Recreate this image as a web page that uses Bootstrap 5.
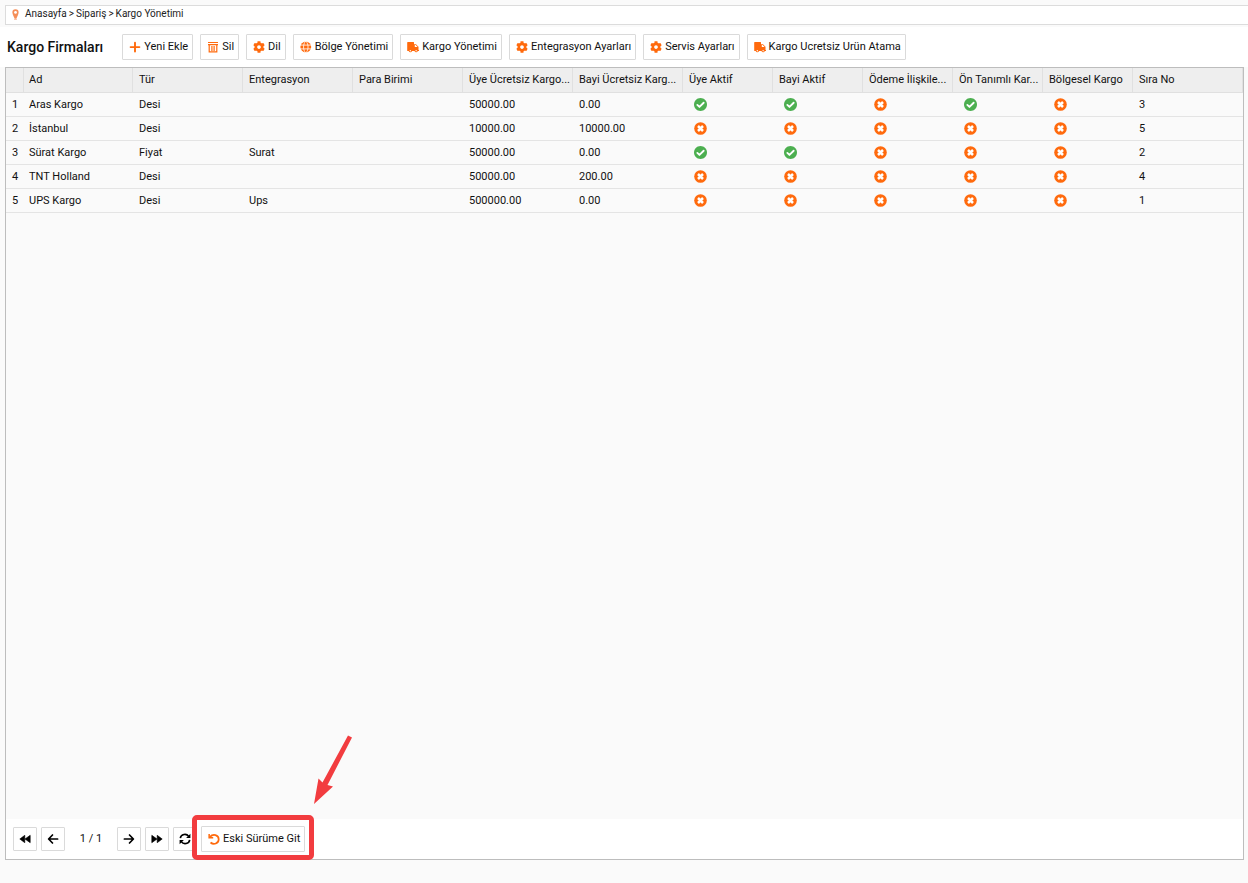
<!DOCTYPE html>
<html lang="tr">
<head>
<meta charset="utf-8">
<meta name="viewport" content="width=device-width, initial-scale=1">
<title>Kargo Yönetimi</title>
<link href="https://cdn.jsdelivr.net/npm/bootstrap@5.3.0/dist/css/bootstrap.min.css" rel="stylesheet">
<style>
  body { background: #fafafa; color: #111; font-family: Roboto, "Liberation Sans", sans-serif; font-size: 11px; line-height: 16px; }
  .crumbs { margin: 5px 0 2px 5px; height: 20px; padding: 0 4px 2px; gap: 4px; border: 1px solid #dcdcdc; border-right: 0; font-size: 10px; }
  .crumbs a { color: #222; text-decoration: none; }
  .crumbs ol { gap: 2px; line-height: 16px; }
  .toolbar { min-height: 40px; padding: 0 7px; gap: 7px; }
  .toolbar h1 { font-size: 14px; line-height: 20px; font-weight: 500; margin: 0 12px 0 0; }
  .tool-btn { --bs-btn-font-size: 11px; --bs-btn-line-height: 16px; --bs-btn-bg: #fff; --bs-btn-color: #111; --bs-btn-border-color: #dadada; --bs-btn-border-radius: 1px; --bs-btn-hover-bg: #f4f4f4; --bs-btn-hover-border-color: #ccc; display: flex; align-items: center; gap: 3px; height: 26px; padding: 0 4px 0 6px; white-space: nowrap; }
  .tool-btn svg { width: 12px; height: 12px; color: #ff6a0d; flex: none; }
  .page-btn { padding: 0; justify-content: center; width: 24px; height: 24px; flex: none; }
  .page-btn svg { color: #000; }
  .grid-panel { margin: 0 4px 23px 5px; border: 1px solid #bdbdbd; }
  .grid-table { table-layout: fixed; border-collapse: separate; border-spacing: 0; line-height: 16px; }
  .grid-table th, .grid-table td { height: 24px; padding: 0 0 0 6px; border-bottom: 1px solid #e4e4e4; white-space: nowrap; vertical-align: middle; font-weight: 400; }
  .grid-table thead th { height: 25px; background: #eee; border-right: 1px solid #e0e0e0; border-bottom-color: #e0e0e0; }
  .grid-table tr > :nth-child(1) { padding: 0; text-align: center; }
  .grid-table tr > :nth-child(2) { padding-left: 5px; }
  .grid-table td svg { display: block; width: 13px; height: 13px; margin-left: 5px; }
  .c-no { width: 18px; } .c-name { width: 109px; } .c-text { width: 110px; } .c-flag { width: 90px; }
  .yes { color: #4caf50; } .no { color: #ff6a0d; }
  .pager { height: 40px; padding: 0 7px; gap: 4px; }
  .page-count { width: 44px; text-align: center; }
  .callout-frame { inset: -11px -9px -8px -9px; border: 5px solid #f23c3f; border-radius: 5px; pointer-events: none; }
  .callout-arrow { left: 112px; bottom: 47px; width: 42px; height: 72px; pointer-events: none; }
</style>
</head>
<body class="d-flex flex-column min-vh-100">
<svg class="d-none" aria-hidden="true">
  <symbol id="check" viewBox="8 8 496 496"><path fill="currentColor" d="M504 256c0 136.967-111.033 248-248 248S8 392.967 8 256 119.033 8 256 8s248 111.033 248 248z"/><path fill="none" stroke="#fff" stroke-width="70" stroke-linecap="round" stroke-linejoin="round" d="M135 272l81 78 161-161"/></symbol>
  <symbol id="cross" viewBox="0 0 13 13"><circle cx="6.5" cy="6.5" r="6.3" fill="currentColor"/><path stroke="#fff" stroke-width="2.5" d="M4 4l5 5M9 4L4 9"/></symbol>
  <symbol id="plus" viewBox="0 0 12 12"><path stroke="currentColor" stroke-width="1.9" stroke-linecap="round" d="M6 1.7v8.8M1.6 6.1h8.8"/></symbol>
  <symbol id="trash" viewBox="0 0 12 12"><path fill="none" stroke="currentColor" stroke-width="1.2" d="M1 1.5h10M1 3.6h10M2.2 3.6v7.3h7.6V3.6M4.9 5v5M7.1 5v5"/></symbol>
  <symbol id="cog" viewBox="0 0 512 512"><path fill="currentColor" d="M487.4 315.7l-42.6-24.6c4.3-23.2 4.3-47 0-70.2l42.6-24.6c4.9-2.8 7.1-8.6 5.5-14-11.1-35.6-30-67.8-54.7-94.6-3.8-4.1-10-5.1-14.8-2.3L380.8 110c-17.9-15.4-38.5-27.3-60.8-35.1V25.8c0-5.6-3.9-10.5-9.4-11.7-36.7-8.2-74.3-7.8-109.2 0-5.5 1.2-9.4 6.1-9.4 11.7V75c-22.2 7.9-42.8 19.8-60.8 35.1L88.7 85.5c-4.9-2.8-11-1.9-14.8 2.3-24.7 26.7-43.6 58.9-54.7 94.6-1.7 5.4.6 11.2 5.5 14L67.3 221c-4.3 23.2-4.3 47 0 70.2l-42.6 24.6c-4.9 2.8-7.1 8.6-5.5 14 11.1 35.6 30 67.8 54.7 94.6 3.8 4.1 10 5.1 14.8 2.3l42.6-24.6c17.9 15.4 38.5 27.3 60.8 35.1v49.2c0 5.6 3.9 10.5 9.4 11.7 36.7 8.2 74.3 7.8 109.2 0 5.5-1.2 9.4-6.1 9.4-11.7v-49.2c22.2-7.9 42.8-19.8 60.8-35.1l42.6 24.6c4.9 2.8 11 1.9 14.8-2.3 24.7-26.7 43.6-58.9 54.7-94.6 1.5-5.5-.7-11.3-5.6-14.1zM256 336c-44.1 0-80-35.9-80-80s35.9-80 80-80 80 35.9 80 80-35.9 80-80 80z"/></symbol>
  <symbol id="globe" viewBox="0 0 12 12"><circle cx="5.8" cy="6" r="5.4" fill="currentColor"/><path fill="none" stroke="#fff" stroke-width=".8" d="M0 4.1h12M0 7.9h12M5.8 0C2.8 3 2.8 9 5.8 12C8.8 9 8.8 3 5.8 0"/></symbol>
  <symbol id="truck" viewBox="0 0 12 12"><path fill="currentColor" fill-rule="evenodd" d="M.8 1H6.500q.5 0 .5.500V3.200H9l2.500 2.500V9H12v1H10.800a1.700 1.700 0 0 1-3.300 0H5a1.700 1.700 0 0 1-3.300 0H.8Q.2 10 .2 9.500V1.600Q.2 1 .8 1zM7.800 4v2h2.800L8.700 4z"/><circle cx="3.300" cy="9.800" r=".7" fill="#fff"/><circle cx="9.100" cy="9.800" r=".7" fill="#fff"/></symbol>
  <symbol id="rewind" viewBox="0 0 12 12"><path fill="currentColor" stroke="currentColor" stroke-width=".6" stroke-linejoin="round" d="M5.800 2.300v7.400L.8 6zM11.200 2.300v7.400L6 6z"/></symbol>
  <symbol id="forward" viewBox="0 0 12 12"><path fill="currentColor" stroke="currentColor" stroke-width=".6" stroke-linejoin="round" d="M6.200 2.300v7.400l5-3.700zM.8 2.300v7.400L6 6z"/></symbol>
  <symbol id="left" viewBox="0 0 12 12"><path fill="none" stroke="currentColor" stroke-width="1.700" stroke-linecap="round" stroke-linejoin="round" d="M5.500 2L1.600 6l3.900 4M2 6h8.600"/></symbol>
  <symbol id="right" viewBox="0 0 12 12"><path fill="none" stroke="currentColor" stroke-width="1.700" stroke-linecap="round" stroke-linejoin="round" d="M6.500 2l3.900 4-3.900 4M10 6H1.400"/></symbol>
  <symbol id="sync" viewBox="0 0 12 12"><path fill="none" stroke="currentColor" stroke-width="1.600" d="M1.300 5.200C1.900 1 7.500.2 9.700 3.400M10.700 6.800C10.100 11 4.500 11.800 2.300 8.600"/><path fill="currentColor" d="M11.400.8v4.300H7.100zM.6 11.200V6.900h4.300z"/></symbol>
  <symbol id="undo" viewBox="0 0 12 12"><path fill="none" stroke="currentColor" stroke-width="1.700" d="M2 3.900C5 .4 10.700 1.800 10.700 6.200C10.700 10.500 5.700 12.200 2.500 9.500"/><path fill="currentColor" d="M.4.9h1.500v3h3.300v1.500H.4z"/></symbol>
  <symbol id="pin" viewBox="0 0 12 12"><path fill="#f58e58" d="M6 .3a3.400 3.400 0 0 1 3.400 3.500C9.400 6 7.500 8.500 7 10.700H5C4.500 8.500 2.600 6 2.600 3.800A3.400 3.400 0 0 1 6 .3z"/><circle cx="6" cy="3.700" r="1.500" fill="#fff"/><path stroke="#f9b898" d="M4.500 11.500h3"/></symbol>
</svg>

<nav class="crumbs d-flex align-items-center bg-white" aria-label="Konum">
  <svg width="11" height="11" aria-hidden="true"><use href="#pin"/></svg>
  <ol class="list-unstyled d-flex mb-0">
    <li><a href="#">Anasayfa</a></li><li>&gt;</li><li><a href="#">Sipariş</a></li><li>&gt;</li><li><a href="#">Kargo Yönetimi</a></li>
  </ol>
</nav>

<header class="toolbar d-flex flex-wrap align-items-center bg-white">
  <h1>Kargo Firmaları</h1>
  <button type="button" class="btn tool-btn"><svg aria-hidden="true"><use href="#plus"/></svg>Yeni Ekle</button>
  <button type="button" class="btn tool-btn"><svg aria-hidden="true"><use href="#trash"/></svg>Sil</button>
  <button type="button" class="btn tool-btn"><svg aria-hidden="true"><use href="#cog"/></svg>Dil</button>
  <button type="button" class="btn tool-btn"><svg aria-hidden="true"><use href="#globe"/></svg>Bölge Yönetimi</button>
  <button type="button" class="btn tool-btn"><svg aria-hidden="true"><use href="#truck"/></svg>Kargo Yönetimi</button>
  <button type="button" class="btn tool-btn"><svg aria-hidden="true"><use href="#cog"/></svg>Entegrasyon Ayarları</button>
  <button type="button" class="btn tool-btn"><svg aria-hidden="true"><use href="#cog"/></svg>Servis Ayarları</button>
  <button type="button" class="btn tool-btn"><svg aria-hidden="true"><use href="#truck"/></svg>Kargo Ucretsiz Urün Atama</button>
</header>

<main class="grid-panel d-flex flex-column flex-grow-1">
  <div class="flex-grow-1">
    <table class="grid-table w-100">
      <colgroup><col class="c-no"><col class="c-name"><col class="c-text" span="5"><col class="c-flag" span="5"><col></colgroup>
      <thead>
        <tr><th></th><th>Ad</th><th>Tür</th><th>Entegrasyon</th><th>Para Birimi</th><th>Üye Ücretsiz Kargo...</th><th>Bayi Ücretsiz Karg...</th><th>Üye Aktif</th><th>Bayi Aktif</th><th>Ödeme İlişkile...</th><th>Ön Tanımlı Kar...</th><th>Bölgesel Kargo</th><th>Sıra No</th></tr>
      </thead>
      <tbody>
        <tr><td>1</td><td>Aras Kargo</td><td>Desi</td><td></td><td></td><td>50000.00</td><td>0.00</td>
          <td><svg class="yes"><use href="#check"/></svg></td><td><svg class="yes"><use href="#check"/></svg></td><td><svg class="no"><use href="#cross"/></svg></td><td><svg class="yes"><use href="#check"/></svg></td><td><svg class="no"><use href="#cross"/></svg></td><td>3</td></tr>
        <tr><td>2</td><td>İstanbul</td><td>Desi</td><td></td><td></td><td>10000.00</td><td>10000.00</td>
          <td><svg class="no"><use href="#cross"/></svg></td><td><svg class="no"><use href="#cross"/></svg></td><td><svg class="no"><use href="#cross"/></svg></td><td><svg class="no"><use href="#cross"/></svg></td><td><svg class="no"><use href="#cross"/></svg></td><td>5</td></tr>
        <tr><td>3</td><td>Sürat Kargo</td><td>Fiyat</td><td>Surat</td><td></td><td>50000.00</td><td>0.00</td>
          <td><svg class="yes"><use href="#check"/></svg></td><td><svg class="yes"><use href="#check"/></svg></td><td><svg class="no"><use href="#cross"/></svg></td><td><svg class="no"><use href="#cross"/></svg></td><td><svg class="no"><use href="#cross"/></svg></td><td>2</td></tr>
        <tr><td>4</td><td>TNT Holland</td><td>Desi</td><td></td><td></td><td>50000.00</td><td>200.00</td>
          <td><svg class="no"><use href="#cross"/></svg></td><td><svg class="no"><use href="#cross"/></svg></td><td><svg class="no"><use href="#cross"/></svg></td><td><svg class="no"><use href="#cross"/></svg></td><td><svg class="no"><use href="#cross"/></svg></td><td>4</td></tr>
        <tr><td>5</td><td>UPS Kargo</td><td>Desi</td><td>Ups</td><td></td><td>500000.00</td><td>0.00</td>
          <td><svg class="no"><use href="#cross"/></svg></td><td><svg class="no"><use href="#cross"/></svg></td><td><svg class="no"><use href="#cross"/></svg></td><td><svg class="no"><use href="#cross"/></svg></td><td><svg class="no"><use href="#cross"/></svg></td><td>1</td></tr>
      </tbody>
    </table>
  </div>
  <footer class="pager d-flex align-items-center bg-white">
    <button type="button" class="btn tool-btn page-btn" aria-label="İlk sayfa"><svg><use href="#rewind"/></svg></button>
    <button type="button" class="btn tool-btn page-btn" aria-label="Önceki sayfa"><svg><use href="#left"/></svg></button>
    <span class="page-count">1 / 1</span>
    <button type="button" class="btn tool-btn page-btn" aria-label="Sonraki sayfa"><svg><use href="#right"/></svg></button>
    <button type="button" class="btn tool-btn page-btn" aria-label="Son sayfa"><svg><use href="#forward"/></svg></button>
    <button type="button" class="btn tool-btn page-btn" aria-label="Yenile"><svg><use href="#sync"/></svg></button>
    <div class="position-relative">
      <button type="button" class="btn tool-btn"><svg aria-hidden="true"><use href="#undo"/></svg>Eski Sürüme Git</button>
      <div class="callout-frame position-absolute"></div>
      <svg class="callout-arrow position-absolute" viewBox="0 0 42 72" aria-hidden="true"><path fill="#f23c3f" d="M35 2.500L39 4.500L14.500 52L20 53.500L1 71L5.500 45.500L9.500 49.500z"/></svg>
    </div>
  </footer>
</main>
<script src="https://cdn.jsdelivr.net/npm/bootstrap@5.3.0/dist/js/bootstrap.bundle.min.js"></script>
</body>
</html>
